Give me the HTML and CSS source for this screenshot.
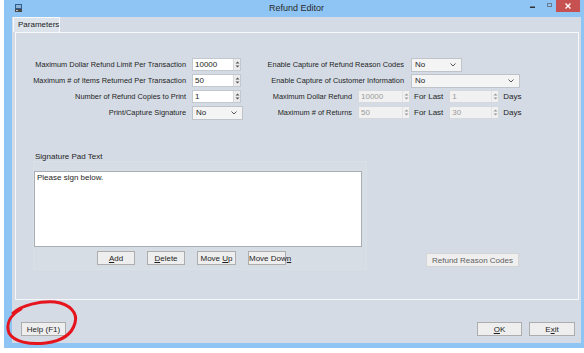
FILE: index.html
```html
<!DOCTYPE html>
<html lang="en">
<head>
    <meta charset="UTF-8">
    <meta name="viewport" content="width=device-width, initial-scale=1.0">
    <title>Refund Editor</title>
    <link rel="stylesheet" href="styles.css">
</head>
<body>
<div class="screen">
    <div class="window">
        <div class="titlebar">
            <div class="app-icon">
                <svg width="7" height="8" viewBox="0 0 7 8"><rect x="0" y="0" width="7" height="5" fill="#2f5f8f"/><rect x="1" y="1" width="5" height="3" fill="#8fb4d6"/><rect x="0" y="5" width="7" height="3" fill="#4a4a4a"/><rect x="1" y="6" width="2" height="1" fill="#c9c9c9"/></svg>
            </div>
            <div class="title">Refund Editor</div>
            <div class="controls">
                <svg width="50" height="13" viewBox="0 0 50 13">
                    <rect x="0" y="6.5" width="5" height="1.5" fill="#333"/>
                    <rect x="17.5" y="3.5" width="4" height="3" fill="none" stroke="#6a7c8e"/>
                    <rect x="26" y="0" width="24" height="12" fill="#c75050"/>
                    <path d="M35.5 3.5 L40.5 8.5 M40.5 3.5 L35.5 8.5" stroke="#fff" stroke-width="1.4"/>
                </svg>
            </div>
        </div>

        <div class="client">
            <div class="tabs"><span class="tab">Parameters</span></div>

            <div class="panel">
                <div class="form">
                    <!-- left column -->
                    <div class="col col-left">
                        <div class="row">
                            <span class="lbl">Maximum Dollar Refund Limit Per Transaction</span>
                            <div class="spin"><span class="val">10000</span><span class="arrows"><svg width="5" height="9" viewBox="0 0 5 9"><path d="M0.5 3.5 L2.5 1.5 L4.5 3.5Z M0.5 5.5 L2.5 7.5 L4.5 5.5Z" fill="#555"/></svg></span></div>
                        </div>
                        <div class="row">
                            <span class="lbl">Maximum # of Items Returned Per Transaction</span>
                            <div class="spin"><span class="val">50</span><span class="arrows"><svg width="5" height="9" viewBox="0 0 5 9"><path d="M0.5 3.5 L2.5 1.5 L4.5 3.5Z M0.5 5.5 L2.5 7.5 L4.5 5.5Z" fill="#555"/></svg></span></div>
                        </div>
                        <div class="row">
                            <span class="lbl">Number of Refund Copies to Print</span>
                            <div class="spin"><span class="val">1</span><span class="arrows"><svg width="5" height="9" viewBox="0 0 5 9"><path d="M0.5 3.5 L2.5 1.5 L4.5 3.5Z M0.5 5.5 L2.5 7.5 L4.5 5.5Z" fill="#555"/></svg></span></div>
                        </div>
                        <div class="row">
                            <span class="lbl">Print/Capture Signature</span>
                            <div class="select sel-sm"><span>No</span><svg width="6" height="4" viewBox="0 0 6 4"><path d="M0.5 0.5 L3 3 L5.5 0.5" fill="none" stroke="#555"/></svg></div>
                        </div>
                    </div>

                    <!-- right column -->
                    <div class="col col-right">
                        <div class="row">
                            <span class="lbl wide">Enable Capture of Refund Reason Codes</span>
                            <div class="select sel-sm"><span>No</span><svg width="6" height="4" viewBox="0 0 6 4"><path d="M0.5 0.5 L3 3 L5.5 0.5" fill="none" stroke="#555"/></svg></div>
                        </div>
                        <div class="row">
                            <span class="lbl wide">Enable Capture of Customer Information</span>
                            <div class="select sel-lg"><span>No</span><svg width="6" height="4" viewBox="0 0 6 4"><path d="M0.5 0.5 L3 3 L5.5 0.5" fill="none" stroke="#555"/></svg></div>
                        </div>
                        <div class="row">
                            <span class="lbl short">Maximum Dollar Refund</span>
                            <div class="spin off w52"><span class="val">10000</span><span class="arrows"><svg width="5" height="9" viewBox="0 0 5 9"><path d="M0.5 3.5 L2.5 1.5 L4.5 3.5Z M0.5 5.5 L2.5 7.5 L4.5 5.5Z" fill="#9a9a9a"/></svg></span></div>
                            <span class="for-last">For Last</span>
                            <div class="spin off w50"><span class="val">1</span><span class="arrows"><svg width="5" height="9" viewBox="0 0 5 9"><path d="M0.5 3.5 L2.5 1.5 L4.5 3.5Z M0.5 5.5 L2.5 7.5 L4.5 5.5Z" fill="#9a9a9a"/></svg></span></div>
                            <span class="days">Days</span>
                        </div>
                        <div class="row">
                            <span class="lbl short">Maximum # of Returns</span>
                            <div class="spin off w52"><span class="val">50</span><span class="arrows"><svg width="5" height="9" viewBox="0 0 5 9"><path d="M0.5 3.5 L2.5 1.5 L4.5 3.5Z M0.5 5.5 L2.5 7.5 L4.5 5.5Z" fill="#9a9a9a"/></svg></span></div>
                            <span class="for-last">For Last</span>
                            <div class="spin off w50"><span class="val">30</span><span class="arrows"><svg width="5" height="9" viewBox="0 0 5 9"><path d="M0.5 3.5 L2.5 1.5 L4.5 3.5Z M0.5 5.5 L2.5 7.5 L4.5 5.5Z" fill="#9a9a9a"/></svg></span></div>
                            <span class="days">Days</span>
                        </div>
                    </div>
                </div>

                <div class="lower">
                    <div class="sig">
                        <div class="sig-label">Signature Pad Text</div>
                        <div class="sig-box">
                            <div class="textarea">Please sign below.</div>
                            <div class="sig-buttons">
                                <button class="btn w38"><u>A</u>dd</button>
                                <button class="btn w38"><u>D</u>elete</button>
                                <button class="btn w39">Move <u>U</u>p</button>
                                <button class="btn w38">Move Dow<u>n</u></button>
                            </div>
                        </div>
                    </div>
                    <button class="btn btn-off reason">Refund Reason Codes</button>
                </div>
            </div>

            <div class="footer">
                <button class="btn w45">Help (F1)</button>
                <div class="footer-right">
                    <button class="btn w45"><u>O</u>K</button>
                    <button class="btn w46">E<u>x</u>it</button>
                </div>
            </div>
        </div>
    </div>

    <!-- red marker circle drawn over the help button -->
    <svg class="scribble" width="584" height="353" viewBox="0 0 584 353">
        <path d="M13 313 C22 305 40 301 55 302 C70 304 78 313 75 323 C72 334 62 341 46 343 C30 345 14 342 9 333 C6 325 9 316 21 309" fill="none" stroke="#e5141d" stroke-width="3" stroke-linecap="round"/>
    </svg>
</div>
</body>
</html>
```

FILE: styles.css
```css
* {
    box-sizing: border-box;
}

body {
    margin: 0;
    background: #fff;
    font-family: "Liberation Sans", Arial, sans-serif;
    font-size: 8px;
    color: #1e1e1e;
    overflow: hidden;
}

.screen {
    position: relative;
    width: 584px;
    height: 353px;
    padding-left: 4px;
    overflow: hidden;
}

.window {
    width: 585px;
    height: 348px;
    background: #8ec5f4;
    display: flex;
    flex-direction: column;
}

/* title bar */
.titlebar {
    height: 17px;
    flex: none;
    display: flex;
}

.app-icon {
    width: 59px;
    padding: 4px 0 0 11px;
}

.app-icon svg {
    display: block;
}

.title {
    flex: 1;
    text-align: center;
    line-height: 17px;
    font-size: 9px;
    color: #2a2a2a;
}

.controls {
    width: 59px;
    padding-right: 9px;
}

.controls svg {
    display: block;
}

/* client area */
.client {
    flex: 1;
    margin: 0 8px 5px;
    background: #d4dbe4;
    display: flex;
    flex-direction: column;
}

.tabs {
    height: 15px;
    padding-left: 1px;
    display: flex;
}

.tab {
    height: 15px;
    width: 47px;
    padding: 2px 0 0 4px;
    border: 1px solid #f8f9fb;
    border-bottom: none;
    background: #dde3ea;
    color: #222;
}

.panel {
    height: 268px;
    margin: 0 2px 0 3px;
    border: 1px solid #f5f7f9;
}

.form {
    display: flex;
    padding: 25px 0 0 4px;
    font-size: 7.4px;
}

.col {
    display: flex;
    flex-direction: column;
    gap: 3px;
}

.col-left {
    width: 230px;
}

.row {
    display: flex;
    align-items: center;
    height: 13px;
}

.lbl {
    flex: none;
    text-align: right;
    white-space: nowrap;
}

.col-left .lbl {
    width: 166px;
    margin-right: 6px;
}

.lbl.wide {
    width: 154px;
    margin-right: 7px;
}

.lbl.short {
    width: 102px;
    margin-right: 6px;
}

.spin {
    display: flex;
    width: 49px;
    height: 13px;
    border: 1px solid #c3c8ce;
    background: #fff;
    font-size: 8px;
}

.spin .val {
    flex: 1;
    padding-left: 2px;
    line-height: 11px;
}

.spin .arrows {
    width: 7px;
    background: #ececec;
    border-left: 1px solid #d8d8d8;
    display: flex;
    align-items: center;
    justify-content: center;
}

.spin.off {
    background: #f1f1f1;
    border-color: #d6d9dd;
    color: #9a9a9a;
}

.spin.off .arrows {
    background: #f1f1f1;
    border-left-color: #e2e2e2;
}

.w52 { width: 52px; }
.w50 { width: 50px; }

.for-last {
    margin: 0 6px 0 4px;
    font-size: 8px;
}

.days {
    margin-left: 4px;
    font-size: 8px;
}

.select {
    display: flex;
    justify-content: space-between;
    align-items: center;
    height: 14px;
    padding: 0 5px 0 3px;
    border: 1px solid #bfc4ca;
    background: #f4f4f4;
    font-size: 8px;
}

.sel-sm { width: 51px; }
.sel-lg { width: 109px; }

/* signature section */
.lower {
    display: flex;
    align-items: flex-end;
    padding-left: 17px;
    margin-top: 33px;
}

.sig-label {
    height: 9px;
    line-height: 9px;
    padding-left: 2px;
}

.sig-box {
    width: 334px;
    padding: 9px 4px 4px 0;
    border: 1px solid #d9e0e7;
    background: #d6dde5;
}

.textarea {
    height: 76px;
    padding: 1px 2px;
    border: 1px solid #a9aeb5;
    background: #fff;
}

.sig-buttons {
    display: flex;
    gap: 12px;
    padding-left: 63px;
    margin-top: 4px;
}

.btn {
    height: 14px;
    padding: 0;
    border: 1px solid #adadad;
    background: #eeeeee;
    font-family: inherit;
    font-size: 8px;
    color: #1e1e1e;
    white-space: nowrap;
}

.w38 { width: 38px; }
.w39 { width: 39px; }
.w45 { width: 45px; }
.w46 { width: 46px; }

.btn-off {
    background: #efefef;
    border-color: #d5d5d5;
    color: #606060;
}

.reason {
    width: 93px;
    margin: 0 0 3px 59px;
}

.footer {
    flex: 1;
    display: flex;
    justify-content: space-between;
    align-items: flex-start;
    padding: 22px 6px 0 9px;
}

.footer-right {
    display: flex;
    gap: 7px;
}

.scribble {
    position: absolute;
    left: 0;
    top: 0;
    pointer-events: none;
}
```
